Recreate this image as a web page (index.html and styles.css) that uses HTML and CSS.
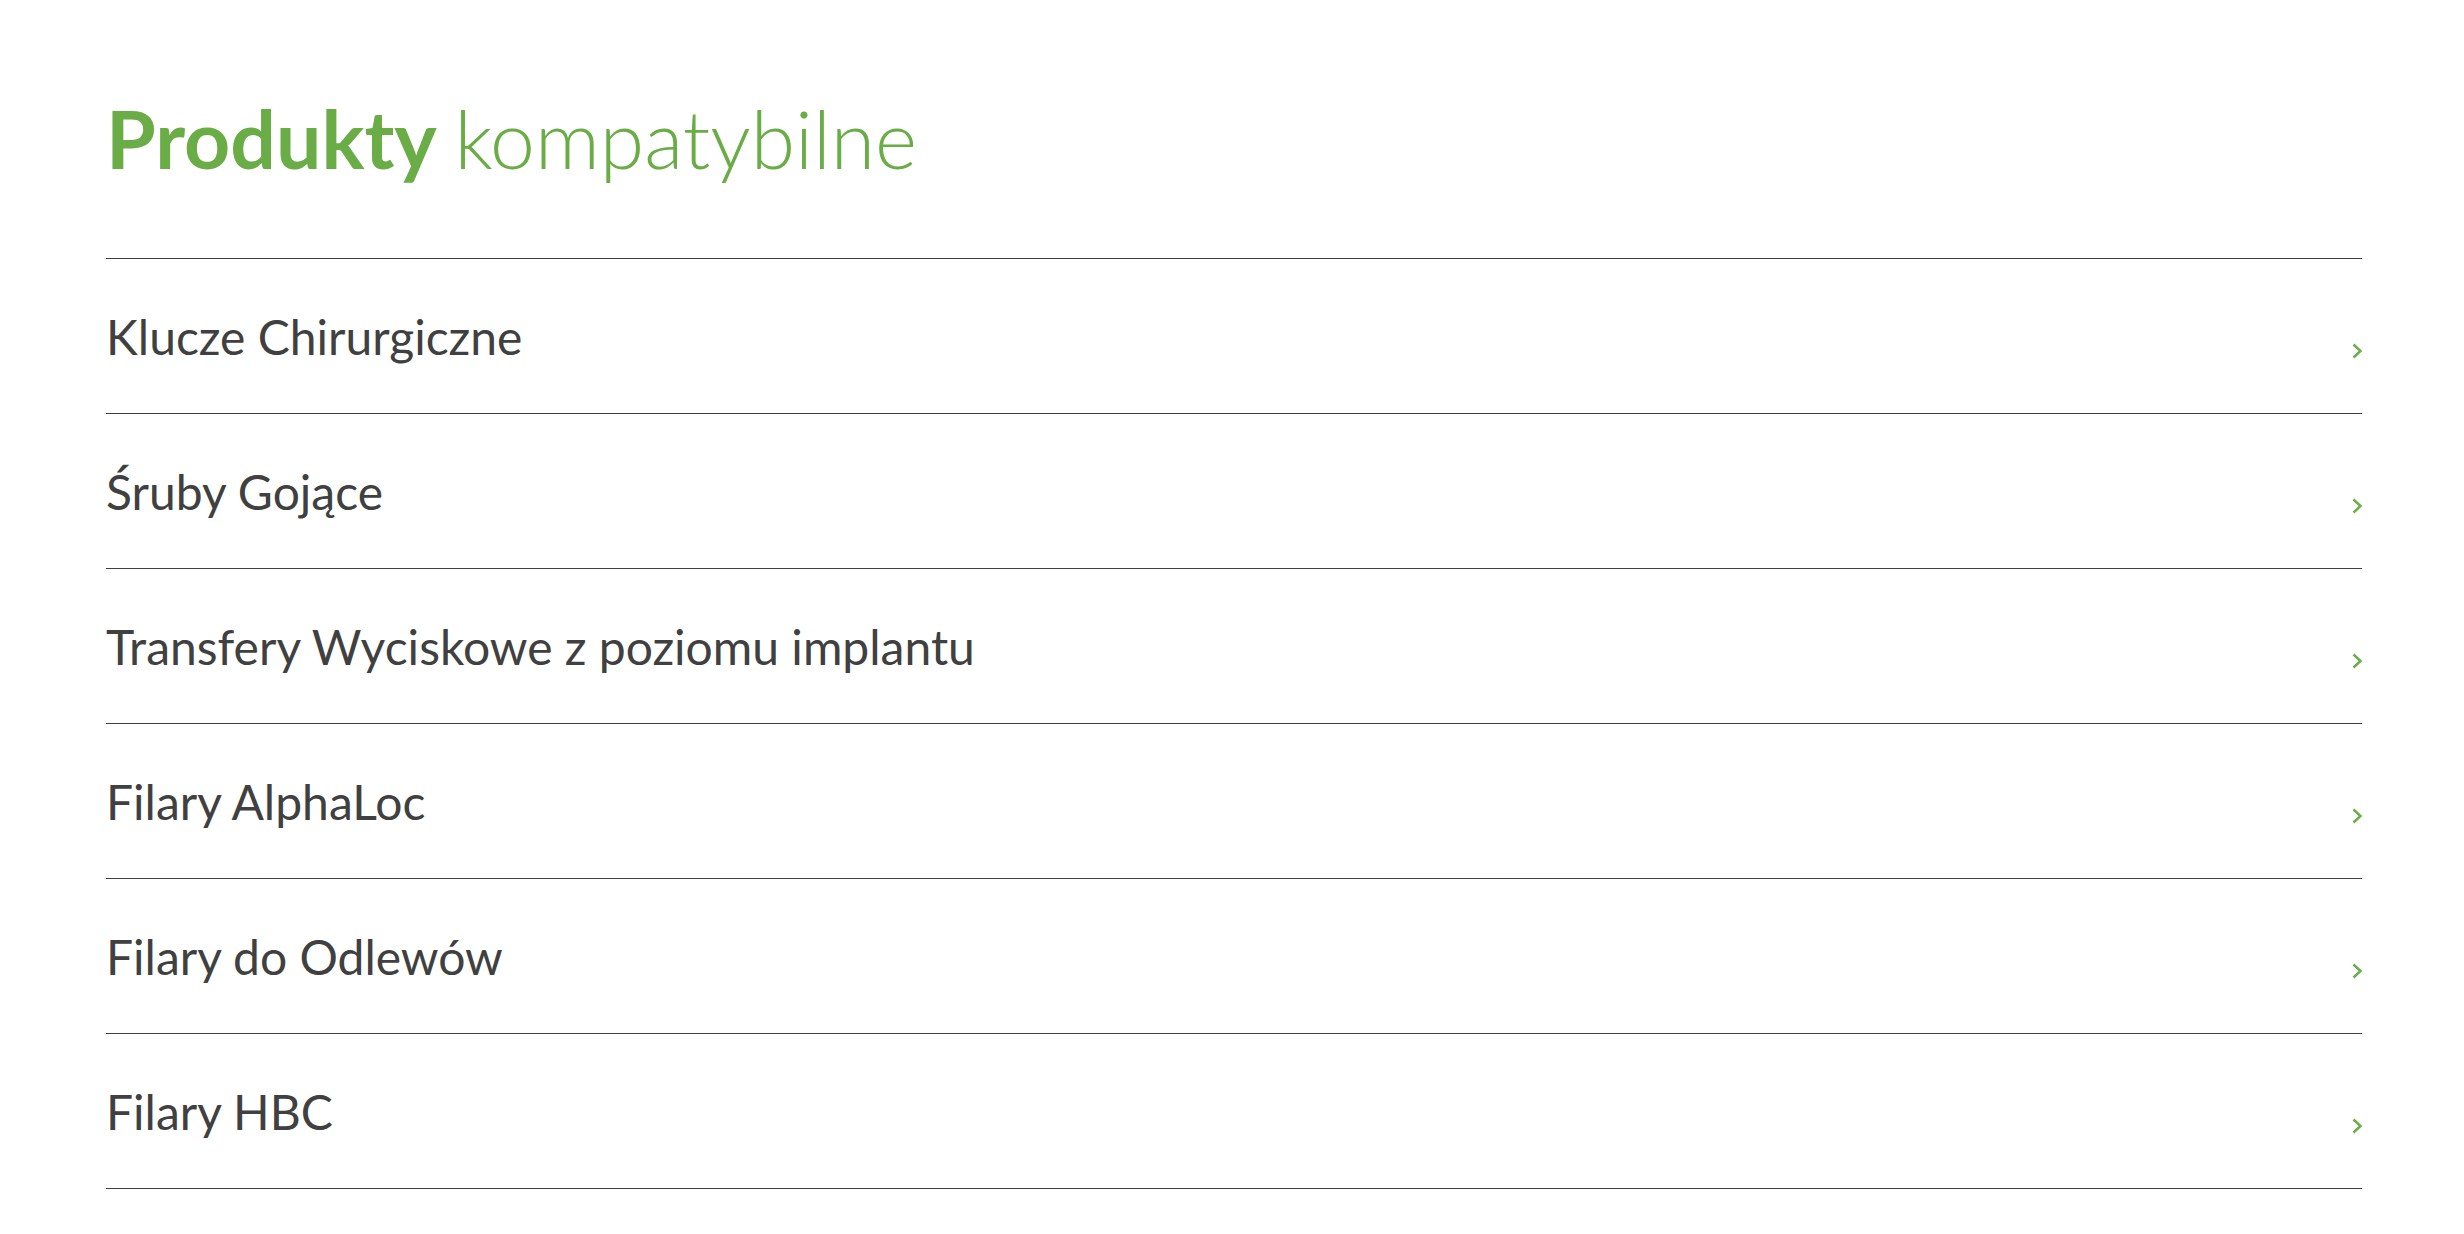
FILE: index.html
```html
<!DOCTYPE html>
<html lang="pl">
<head>
<meta charset="utf-8">
<title>Produkty kompatybilne</title>
<link rel="stylesheet" href="styles.css">
</head>
<body>
<section class="wrap">
  <h1 class="title"><strong>Produkty</strong> <span class="light">kompatybilne</span></h1>
  <ul class="list">
    <li class="item"><span class="label">Klucze Chirurgiczne</span><svg class="chev" width="10" height="16" viewBox="0 0 10 16"><polyline points="1.5,1.5 8.5,8 1.5,14.5" fill="none" stroke="#6aac46" stroke-width="2.4"/></svg></li>
    <li class="item"><span class="label">Śruby Gojące</span><svg class="chev" width="10" height="16" viewBox="0 0 10 16"><polyline points="1.5,1.5 8.5,8 1.5,14.5" fill="none" stroke="#6aac46" stroke-width="2.4"/></svg></li>
    <li class="item"><span class="label">Transfery Wyciskowe z poziomu implantu</span><svg class="chev" width="10" height="16" viewBox="0 0 10 16"><polyline points="1.5,1.5 8.5,8 1.5,14.5" fill="none" stroke="#6aac46" stroke-width="2.4"/></svg></li>
    <li class="item"><span class="label">Filary AlphaLoc</span><svg class="chev" width="10" height="16" viewBox="0 0 10 16"><polyline points="1.5,1.5 8.5,8 1.5,14.5" fill="none" stroke="#6aac46" stroke-width="2.4"/></svg></li>
    <li class="item"><span class="label">Filary do Odlewów</span><svg class="chev" width="10" height="16" viewBox="0 0 10 16"><polyline points="1.5,1.5 8.5,8 1.5,14.5" fill="none" stroke="#6aac46" stroke-width="2.4"/></svg></li>
    <li class="item"><span class="label">Filary HBC</span><svg class="chev" width="10" height="16" viewBox="0 0 10 16"><polyline points="1.5,1.5 8.5,8 1.5,14.5" fill="none" stroke="#6aac46" stroke-width="2.4"/></svg></li>
  </ul>
</section>
</body>
</html>
```
FILE: styles.css
```css
html, body {
  margin: 0;
  padding: 0;
  background: #ffffff;
}
body {
  font-family: Lato, "Open Sans", "Liberation Sans", sans-serif;
}
.wrap {
  padding: 98px 102px 0 106px;
}
.title {
  margin: 0 0 80px 0;
  font-size: 80.5px;
  line-height: 80px;
  height: 80px;
  color: #6aac46;
  font-weight: 700;
}
.title strong {
  font-weight: 700;
}
.title .light {
  font-weight: 300;
}
.list {
  list-style: none;
  margin: 0;
  padding: 0;
  border-bottom: 1px solid #404040;
}
.item {
  display: flex;
  justify-content: space-between;
  align-items: flex-start;
  border-top: 1px solid #404040;
  padding: 54px 0 52px 0;
}
.label {
  font-size: 48px;
  line-height: 1;
  color: #404040;
  font-weight: 400;
}
.chev {
  display: block;
  margin-top: 30px;
}
```
